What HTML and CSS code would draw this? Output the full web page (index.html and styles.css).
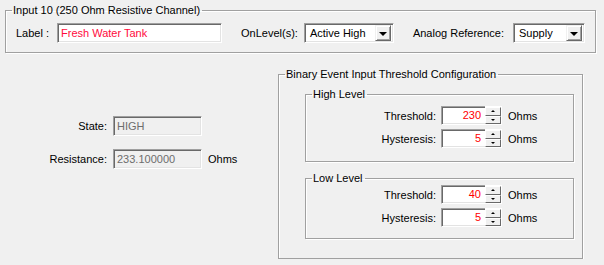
FILE: index.html
```html
<!DOCTYPE html>
<html>
<head>
    <title>Input 10 - Resistive Channel</title>
    <link rel="stylesheet" href="styles.css">
</head>
<body>
    <fieldset class="group top-group">
        <legend>Input 10 (250 Ohm Resistive Channel)</legend>
        <div class="top-row">
            <span class="lbl">Label :</span>
            <div class="field label-field">Fresh Water Tank</div>
            <span class="lbl onlevel-lbl">OnLevel(s):</span>
            <div class="combo onlevel">
                <span class="combo-text">Active High</span>
                <span class="combo-btn"><i class="arrow"></i></span>
            </div>
            <span class="lbl ref-lbl">Analog Reference:</span>
            <div class="combo ref">
                <span class="combo-text">Supply</span>
                <span class="combo-btn"><i class="arrow"></i></span>
            </div>
        </div>
    </fieldset>

    <div class="lower">
        <div class="status">
            <div class="status-row">
                <span class="status-lbl">State:</span>
                <div class="field readonly">HIGH</div>
            </div>
            <div class="status-row">
                <span class="status-lbl">Resistance:</span>
                <div class="field readonly">233.100000</div>
                <span class="unit">Ohms</span>
            </div>
        </div>

        <fieldset class="group threshold-group">
            <legend>Binary Event Input Threshold Configuration</legend>

            <fieldset class="group level high-level">
                <legend>High Level</legend>
                <div class="spin-row">
                    <span class="spin-lbl">Threshold:</span>
                    <div class="spin">
                        <div class="field spin-field">230</div>
                        <div class="spin-btns"><span class="spin-btn"><i class="up"></i></span><span class="spin-btn"><i class="down"></i></span></div>
                    </div>
                    <span class="unit">Ohms</span>
                </div>
                <div class="spin-row">
                    <span class="spin-lbl">Hysteresis:</span>
                    <div class="spin">
                        <div class="field spin-field">5</div>
                        <div class="spin-btns"><span class="spin-btn"><i class="up"></i></span><span class="spin-btn"><i class="down"></i></span></div>
                    </div>
                    <span class="unit">Ohms</span>
                </div>
            </fieldset>

            <fieldset class="group level low-level">
                <legend>Low Level</legend>
                <div class="spin-row">
                    <span class="spin-lbl">Threshold:</span>
                    <div class="spin">
                        <div class="field spin-field">40</div>
                        <div class="spin-btns"><span class="spin-btn"><i class="up"></i></span><span class="spin-btn"><i class="down"></i></span></div>
                    </div>
                    <span class="unit">Ohms</span>
                </div>
                <div class="spin-row">
                    <span class="spin-lbl">Hysteresis:</span>
                    <div class="spin">
                        <div class="field spin-field">5</div>
                        <div class="spin-btns"><span class="spin-btn"><i class="up"></i></span><span class="spin-btn"><i class="down"></i></span></div>
                    </div>
                    <span class="unit">Ohms</span>
                </div>
            </fieldset>
        </fieldset>
    </div>
</body>
</html>
```

FILE: styles.css
```css
body {
    margin: 0;
    padding: 4px 8px 0 5px;
    background: #f0f0f0;
    font-family: "Liberation Sans", Arial, sans-serif;
    font-size: 11px;
    color: #000;
    overflow: hidden;
}

/* etched group boxes */
.group {
    margin: 0;
    padding: 0;
    min-width: 0;
    border: 1px solid #a0a0a0;
    box-shadow: 1px 1px 0 #fff, inset 1px 1px 0 #fff;
}
.group legend {
    padding: 0 2px 0 1px;
    margin-left: 6px;
    line-height: 13px;
}

.top-group {
    width: 591px;
    box-sizing: border-box;
    padding: 6px 0 9px 0;
}
.top-row {
    display: flex;
    align-items: center;
    height: 20px;
    padding-left: 10px;
}
.lbl {
    white-space: nowrap;
}

/* sunken text fields */
.field {
    box-sizing: border-box;
    height: 20px;
    line-height: 18px;
    padding: 0 3px;
    background: #fff;
    border: 1px solid;
    border-color: #a0a0a0 #fff #fff #a0a0a0;
    box-shadow: inset 1px 1px 0 #696969, inset -1px -1px 0 #e3e3e3;
    white-space: nowrap;
}
.label-field {
    width: 165px;
    margin-left: 8px;
    color: #ff0a3c;
}
.onlevel-lbl {
    margin-left: 19px;
}
.ref-lbl {
    margin-left: 19px;
}

/* drop down boxes */
.combo {
    box-sizing: border-box;
    display: flex;
    align-items: center;
    height: 20px;
    background: #fff;
    border: 1px solid;
    border-color: #a0a0a0 #fff #fff #a0a0a0;
    box-shadow: inset 1px 1px 0 #696969, inset -1px -1px 0 #e3e3e3;
    padding: 2px;
}
.combo-text {
    flex: 1;
    padding-left: 3px;
}
.onlevel {
    width: 90px;
    margin-left: 6px;
}
.ref {
    width: 72px;
    margin-left: 9px;
}
.combo-btn {
    box-sizing: border-box;
    width: 16px;
    height: 16px;
    background: #f0f0f0;
    border: 1px solid;
    border-color: #f0f0f0 #696969 #696969 #f0f0f0;
    box-shadow: inset 1px 1px 0 #fff, inset -1px -1px 0 #a0a0a0;
    display: flex;
    align-items: center;
    justify-content: center;
}
.arrow {
    width: 0;
    height: 0;
    border-left: 4px solid transparent;
    border-right: 4px solid transparent;
    border-top: 4px solid #000;
    margin-top: 1px;
}

/* lower part */
.lower {
    display: flex;
    margin-top: 15px;
}
.status {
    width: 273px;
    padding-top: 48px;
}
.status-row {
    display: flex;
    align-items: center;
    height: 20px;
    margin-bottom: 13px;
}
.status-lbl {
    width: 102px;
    text-align: right;
    margin-right: 6px;
}
.field.readonly {
    width: 89px;
    background: #f0f0f0;
    color: #6d6d6d;
}
.unit {
    margin-left: 6px;
}

.threshold-group {
    width: 305px;
    box-sizing: border-box;
    padding: 7px 8px 19px 0;
}
.level {
    margin-left: 26px;
    padding: 5px 0 13px 0;
}
.low-level {
    margin-top: 10px;
    padding: 0 0 11px 0;
}
.spin-row {
    display: flex;
    align-items: center;
    height: 19px;
    margin-bottom: 4px;
}
.spin-row:last-child {
    margin-bottom: 0;
}
.spin-lbl {
    width: 130px;
    text-align: right;
    margin-right: 5px;
}
.spin {
    display: flex;
    height: 19px;
}
.spin-field {
    width: 44px;
    height: 19px;
    line-height: 17px;
    text-align: right;
    padding-right: 4px;
    color: #f00;
    border-right: none;
    box-shadow: inset 1px 1px 0 #696969, inset 0 -1px 0 #e3e3e3;
}
.spin-btns {
    display: flex;
    flex-direction: column;
    width: 17px;
    height: 19px;
    background: #fff;
    padding: 1px 1px 1px 0;
    box-sizing: border-box;
}
.spin-btn {
    flex: 1;
    box-sizing: border-box;
    background: #f0f0f0;
    border: 1px solid;
    border-color: #fff #696969 #696969 #fff;
    display: flex;
    align-items: center;
    justify-content: center;
}
.up {
    width: 0;
    height: 0;
    border-left: 2px solid transparent;
    border-right: 2px solid transparent;
    border-bottom: 2px solid #000;
}
.down {
    width: 0;
    height: 0;
    border-left: 2px solid transparent;
    border-right: 2px solid transparent;
    border-top: 2px solid #000;
}
```
